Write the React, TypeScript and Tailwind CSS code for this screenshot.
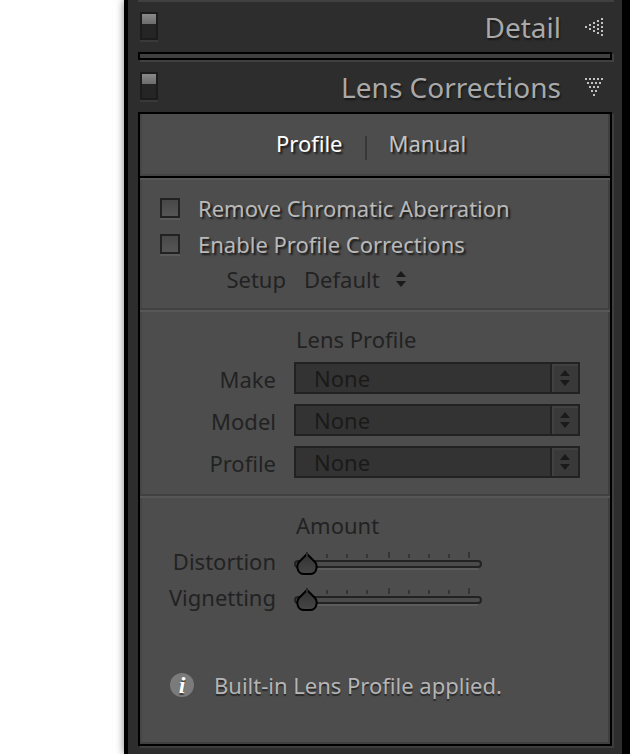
import { useId, useState } from "react";
import type { ReactNode } from "react";
import { clsx } from "clsx";

const LIFTED = "[text-shadow:2px_2px_2px_rgba(0,0,0,0.7)]";

// Rows of the dotted disclosure triangle, pointing down
const DOT_ROWS = [5, 4, 3, 2, 1];

function DottedTriangle({ open }: { open: boolean }) {
	return (
		<svg
			viewBox="0 0 18 18"
			className={clsx("h-[18px] w-[18px] fill-[#c2c2c2]", !open && "rotate-90")}
			aria-hidden="true"
		>
			{DOT_ROWS.map((count, row) =>
				Array.from({ length: count }, (_, i) => (
					<rect key={`${row}-${i}`} x={row * 2 + i * 4} y={row * 4} width="2" height="2" />
				))
			)}
		</svg>
	);
}

function UpDownArrows() {
	return (
		<svg viewBox="0 0 10 16" className="h-4 w-[10px] fill-[#1a1a1a]" aria-hidden="true">
			<path d="M5 0 10 6H0Z" />
			<path d="M0 10h10L5 16Z" />
		</svg>
	);
}

interface PanelHeaderProps {
	title: string;
	open: boolean;
	onToggle: () => void;
}

function PanelHeader({ title, open, onToggle }: PanelHeaderProps) {
	const [active, setActive] = useState(true);

	return (
		<div className="flex h-[50px] items-center justify-between pr-[9px] pl-[2px]">
			<button
				type="button"
				aria-label={`${title} on/off`}
				aria-pressed={active}
				onClick={() => setActive(!active)}
				className={clsx(
					"mb-[2px] flex h-7 w-[18px] border-2 border-[#1c1c1c] bg-[#252525] shadow-[0_2px_0_#393939]",
					active ? "items-start" : "items-end"
				)}
			>
				<span className="h-[10px] w-full bg-linear-to-b from-[#898989] to-[#6c6c6c]" />
			</button>
			<button
				type="button"
				aria-expanded={open}
				onClick={onToggle}
				className="flex items-center gap-6 text-[28px] leading-8 text-[#a9a9a9] [text-shadow:1px_2px_2px_rgba(0,0,0,0.5)]"
			>
				{title}
				<DottedTriangle open={open} />
			</button>
		</div>
	);
}

interface CheckRowProps {
	label: string;
	checked: boolean;
	onChange: (checked: boolean) => void;
}

function CheckRow({ label, checked, onChange }: CheckRowProps) {
	return (
		<label className={clsx("flex h-9 items-center gap-[18px] pl-5 text-[#b9b9b9]", LIFTED)}>
			<input
				type="checkbox"
				checked={checked}
				onChange={(e) => onChange(e.target.checked)}
				className="h-5 w-5 appearance-none border-2 border-[#222222] bg-linear-to-b from-[#484848] to-[#565656] shadow-[0_2px_0_#5a5a5a] checked:from-[#a0a0a0] checked:to-[#808080]"
			/>
			{label}
		</label>
	);
}

function SelectRow({ label, disabled }: { label: string; disabled: boolean }) {
	const id = useId();

	return (
		<div className="flex h-[42px] items-center gap-[18px]">
			<label htmlFor={id} className="w-[136px] shrink-0 pt-[2px] text-right">
				{label}
			</label>
			<div className="relative mr-[30px] grow">
				<select
					id={id}
					disabled={disabled}
					className="block h-8 w-full appearance-none border-2 border-[#222222] bg-[#333333] pl-[18px] text-[#1a1a1a] disabled:opacity-100"
				>
					<option>None</option>
				</select>
				<span className="pointer-events-none absolute inset-y-[2px] right-[2px] flex w-7 items-center justify-center border-l-2 border-[#222222] bg-[#393939] shadow-[inset_2px_2px_0_#414141]">
					<UpDownArrows />
				</span>
			</div>
		</div>
	);
}

const TICKS = [32, 52, 72, 94, 114, 134, 154, 174];

function SliderRow({ label, disabled }: { label: string; disabled: boolean }) {
	const id = useId();
	const [value, setValue] = useState(0);

	return (
		<div className="flex h-9 items-center gap-[18px]">
			<label htmlFor={id} className="w-[136px] shrink-0 text-right">
				{label}
			</label>
			<div className="relative mt-1 h-[26px] w-[188px]">
				<svg viewBox="0 0 188 26" className="h-full w-full" aria-hidden="true">
					<defs>
						<linearGradient id={`${id}-knob`} x1="0" y1="0" x2="0" y2="1">
							<stop offset="0" stopColor="#333333" />
							<stop offset="1" stopColor="#464646" />
						</linearGradient>
					</defs>
					{TICKS.map((x) => {
						const major = x === 94 || x === 174;
						return (
							<rect
								key={x}
								x={x}
								y={major ? 2 : 4}
								width="2"
								height={major ? 6 : 4}
								fill="#353535"
							/>
						);
					})}
					<path d="M4 19h180" stroke="#5b5b5b" strokeWidth="2" />
					<rect x="1" y="11" width="186" height="6" rx="3" fill="#4b4b4b" stroke="#222222" strokeWidth="2" />
					<g transform={`translate(${(value * 162) / 200} 0)`}>
						<path
							d="M13 4L21 12C23 14 23 18 22 20C21 23 19 24 16 24H10C7 24 5 23 4 20C3 18 3 14 5 12Z"
							fill={`url(#${id}-knob)`}
							stroke="#000000"
							strokeWidth="2"
							strokeLinejoin="round"
						/>
						<path d="M13 2v4" stroke="#2a2a2a" strokeWidth="2" />
					</g>
				</svg>
				<input
					id={id}
					type="range"
					min={0}
					max={200}
					value={value}
					disabled={disabled}
					onChange={(e) => setValue(Number(e.target.value))}
					className="absolute inset-0 w-full opacity-0"
				/>
			</div>
		</div>
	);
}

function Section({ children }: { children: ReactNode }) {
	return (
		<section className="border-t-2 border-b-2 border-t-[#575757] border-b-[#414141] text-[#222222]">
			{children}
		</section>
	);
}

type Tab = "Profile" | "Manual";

export default function App() {
	const [tab, setTab] = useState<Tab>("Profile");
	const [detailOpen, setDetailOpen] = useState(false);
	const [lensOpen, setLensOpen] = useState(true);
	const [removeCA, setRemoveCA] = useState(false);
	const [enabled, setEnabled] = useState(false);

	const tabClass = (name: Tab) => clsx(LIFTED, tab === name ? "text-white" : "text-[#c4c4c4]");

	return (
		<div className="flex min-h-screen bg-white pl-[124px] font-['Noto_Sans',sans-serif] text-[22px] leading-7">
			<main className="grow border-r-8 border-l-4 border-black bg-[#2d2d2d] pr-[10px] pl-[10px] shadow-[0_0_8px_rgba(0,0,0,0.5)]">
				<div className="-mr-[2px] h-[2px] bg-[#404040]" />
				<PanelHeader title="Detail" open={detailOpen} onToggle={() => setDetailOpen(!detailOpen)} />
				<div className="mb-[2px] h-2 border-2 border-black bg-[#404040] shadow-[2px_2px_0_#404040]" />
				<PanelHeader title="Lens Corrections" open={lensOpen} onToggle={() => setLensOpen(!lensOpen)} />

				{lensOpen && (
					<div className="border-2 border-black bg-[#4d4d4d] shadow-[2px_2px_0_#3d3d3d,inset_-2px_-2px_0_#3f3f3f,inset_2px_0_0_#464646]">
						{/* Tabs */}
						<div className="flex h-16 items-center justify-center gap-[22px] border-b-2 border-black pr-2 pb-1 shadow-[inset_0_-2px_0_#444444]">
							<button type="button" onClick={() => setTab("Profile")} className={tabClass("Profile")}>
								Profile
							</button>
							<span className="mt-[10px] h-6 w-[2px] bg-[#373737]" />
							<button type="button" onClick={() => setTab("Manual")} className={tabClass("Manual")}>
								Manual
							</button>
						</div>

						<Section>
							<div className="pt-[10px] pb-[10px]">
								<CheckRow label="Remove Chromatic Aberration" checked={removeCA} onChange={setRemoveCA} />
								<CheckRow label="Enable Profile Corrections" checked={enabled} onChange={setEnabled} />
								<div className="flex h-9 items-center gap-[18px] pb-[2px]">
									<label htmlFor="setup" className="w-[146px] text-right">
										Setup
									</label>
									<div className="relative flex items-center">
										<select
											id="setup"
											disabled={!enabled}
											className="appearance-none pr-[26px] text-[#222222] disabled:opacity-100"
										>
											<option>Default</option>
										</select>
										<span className="pointer-events-none absolute right-0">
											<UpDownArrows />
										</span>
									</div>
								</div>
							</div>
						</Section>

						<Section>
							<div className="pt-[13px] pb-[11px]">
								<h2 className="h-8 pl-[156px]">Lens Profile</h2>
								<SelectRow label="Make" disabled={!enabled} />
								<SelectRow label="Model" disabled={!enabled} />
								<SelectRow label="Profile" disabled={!enabled} />
							</div>
						</Section>

						<div className="border-t-2 border-[#575757] pt-[13px] text-[#222222]">
							<h2 className="h-8 pl-[156px]">Amount</h2>
							<SliderRow label="Distortion" disabled={!enabled} />
							<SliderRow label="Vignetting" disabled={!enabled} />
						</div>

						<p className="flex items-center gap-5 pt-14 pb-[45px] pl-[30px] text-[#b5b5b5] [text-shadow:0_2px_1px_rgba(0,0,0,0.5)]">
							<span
								aria-hidden="true"
								className="flex h-6 w-6 items-center justify-center rounded-full bg-[#7b7b7b] font-['Liberation_Serif',serif] text-2xl leading-6 font-bold text-white italic"
							>
								i
							</span>
							Built-in Lens Profile applied.
						</p>
					</div>
				)}
			</main>
		</div>
	);
}
